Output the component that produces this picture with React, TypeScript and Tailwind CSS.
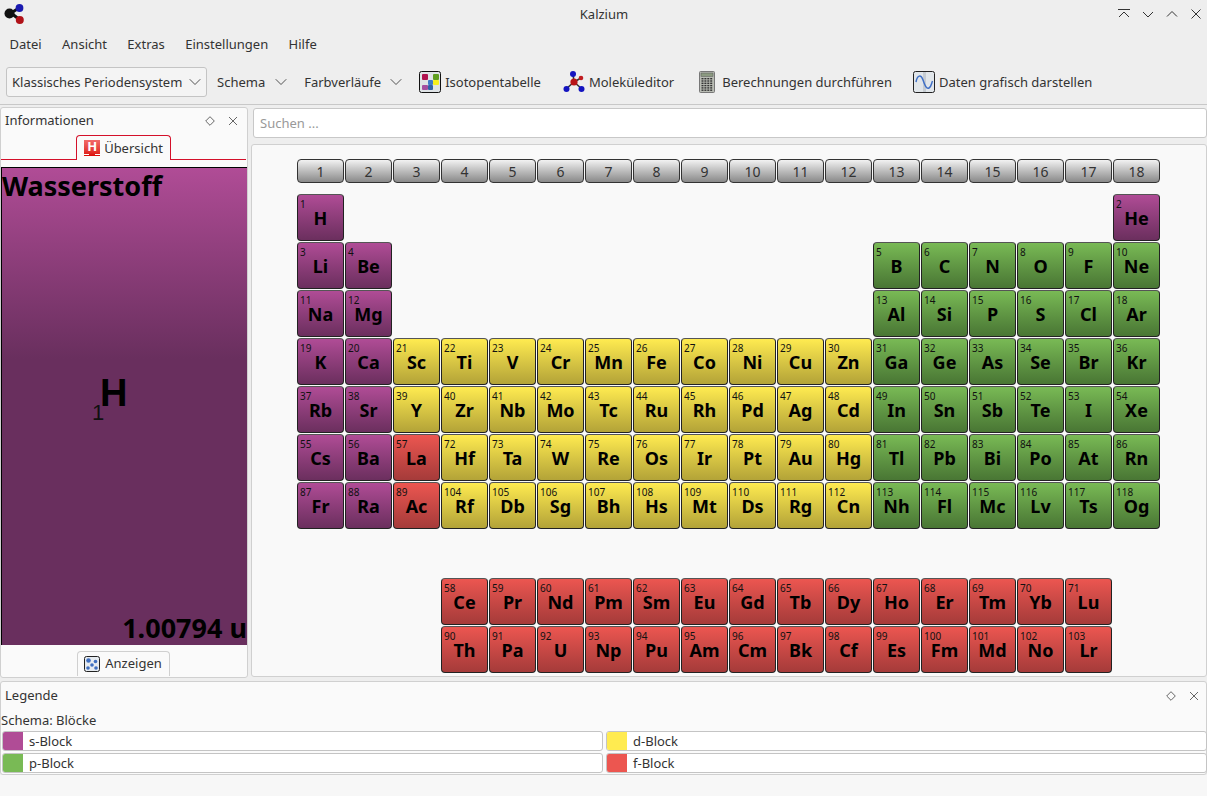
import { ChevronDown } from "lucide-react";

type Block = "s" | "p" | "d" | "f";

const cellStyles: Record<Block, string> = {
  s: "from-[#b04c96] to-[#6b2f5e]",
  p: "from-[#79ba55] to-[#497634]",
  d: "from-[#ffeb50] to-[#b3a338]",
  f: "from-[#ec5650] to-[#a53b3a]",
};

type Cell = { num: number; sym: string; block: Block } | null;

function seq(start: number, syms: string, block: Block): Cell[] {
  return syms.split(" ").map((sym, i) => ({ num: start + i, sym, block }));
}

function blanks(n: number): Cell[] {
  return Array.from({ length: n }, () => null);
}

const cells: Cell[] = [
  ...seq(1, "H", "s"), ...blanks(16), ...seq(2, "He", "s"),
  ...seq(3, "Li Be", "s"), ...blanks(10), ...seq(5, "B C N O F Ne", "p"),
  ...seq(11, "Na Mg", "s"), ...blanks(10), ...seq(13, "Al Si P S Cl Ar", "p"),
  ...seq(19, "K Ca", "s"), ...seq(21, "Sc Ti V Cr Mn Fe Co Ni Cu Zn", "d"), ...seq(31, "Ga Ge As Se Br Kr", "p"),
  ...seq(37, "Rb Sr", "s"), ...seq(39, "Y Zr Nb Mo Tc Ru Rh Pd Ag Cd", "d"), ...seq(49, "In Sn Sb Te I Xe", "p"),
  ...seq(55, "Cs Ba", "s"), ...seq(57, "La", "f"), ...seq(72, "Hf Ta W Re Os Ir Pt Au Hg", "d"), ...seq(81, "Tl Pb Bi Po At Rn", "p"),
  ...seq(87, "Fr Ra", "s"), ...seq(89, "Ac", "f"), ...seq(104, "Rf Db Sg Bh Hs Mt Ds Rg Cn", "d"), ...seq(113, "Nh Fl Mc Lv Ts Og", "p"),
  ...blanks(18),
  ...blanks(3), ...seq(58, "Ce Pr Nd Pm Sm Eu Gd Tb Dy Ho Er Tm Yb Lu", "f"), ...blanks(1),
  ...blanks(3), ...seq(90, "Th Pa U Np Pu Am Cm Bk Cf Es Fm Md No Lr", "f"), ...blanks(1),
];

function Logo() {
  return (
    <svg width="24" height="24" viewBox="0 0 24 24">
      <path d="M10 13L18 8M10 13L19 20" stroke="#111" strokeWidth="3" />
      <circle cx="8.5" cy="13.5" r="5" fill="#111" />
      <circle cx="18.5" cy="8" r="3.9" fill="#1a1ab0" />
      <circle cx="18.8" cy="20" r="4" fill="#b01218" />
    </svg>
  );
}

function IsotopeIcon() {
  return (
    <svg width="22" height="22" viewBox="0 0 22 22">
      <rect x="0.5" y="0.5" width="21" height="21" rx="2" fill="#dfe3e6" stroke="#111" />
      <rect x="3" y="3" width="6" height="6" rx="1" fill="#b0124e" />
      <rect x="14" y="3" width="6" height="6" rx="1" fill="#5f9e1f" />
      <rect x="14" y="9" width="6" height="5" rx="1" fill="#f5ef1e" />
      <rect x="9" y="9" width="5" height="5" rx="1" fill="#3f79c9" />
      <rect x="9" y="14" width="5" height="5" rx="1" fill="#2f62a8" />
      <rect x="3" y="14" width="6" height="5" rx="1" fill="#a44ea0" />
    </svg>
  );
}

function MoleculeIcon() {
  return (
    <svg width="22" height="24" viewBox="0 0 22 24">
      <path d="M11 12L10 4M11 12L3 19M11 12L19 19M11 12L18 8" stroke="#333" strokeWidth="1.6" />
      <circle cx="10" cy="4" r="3" fill="#1414c0" />
      <circle cx="3.5" cy="19" r="3" fill="#1414c0" />
      <circle cx="18.5" cy="19" r="3" fill="#1414c0" />
      <circle cx="18" cy="8" r="2.3" fill="#c01c20" />
      <circle cx="11" cy="12" r="3.6" fill="#b81418" />
    </svg>
  );
}

function CalculatorIcon() {
  const keys = [];
  for (let r = 0; r < 6; r++) {
    for (let c = 0; c < 4; c++) {
      keys.push(<rect key={`${r}-${c}`} x={2.5 + c * 2.9} y={7 + r * 2.3} width="2" height="1.4" fill="#333" />);
    }
  }
  return (
    <svg width="16" height="22" viewBox="0 0 16 22">
      <rect x="0.5" y="0.5" width="15" height="21" rx="1" fill="#b9bcb4" stroke="#777" />
      <rect x="2" y="2" width="12" height="3.4" fill="#8b9a80" stroke="#555" strokeWidth="0.5" />
      {keys}
    </svg>
  );
}

function PlotIcon() {
  return (
    <svg width="22" height="22" viewBox="0 0 22 22">
      <rect x="0.5" y="0.5" width="21" height="21" rx="2" fill="#e1e6ea" stroke="#222" />
      <rect x="10" y="1" width="3" height="20" fill="#c6ccd2" />
      <path d="M3 11C4.5 3.5 8 3.5 10 9S13.5 18.5 16 17 18.5 12 19.5 10" fill="none" stroke="#3f6fc6" strokeWidth="1.5" />
    </svg>
  );
}

function TabHIcon() {
  return (
    <div className="w-4 h-4 bg-gradient-to-b from-[#f26a6a] to-[#dc0000] flex flex-col items-center">
      <span className="text-white font-bold text-[13px] leading-[13px]">H</span>
      <div className="w-full h-[1px] mt-[1px] flex justify-between">
        <div className="w-[5px] bg-white" />
        <div className="w-[5px] bg-white" />
      </div>
    </div>
  );
}

function DiceIcon() {
  return (
    <svg width="16" height="16" viewBox="0 0 16 16">
      <rect x="0.5" y="0.5" width="15" height="15" rx="2" fill="#e6ebf0" stroke="#222" />
      <circle cx="4.5" cy="4.5" r="2.3" fill="#3f6fc0" />
      <circle cx="11.5" cy="5.5" r="1.8" fill="#3f6fc0" />
      <circle cx="8" cy="9" r="1.8" fill="#3f6fc0" />
      <circle cx="4" cy="12" r="1.8" fill="#3f6fc0" />
      <circle cx="12" cy="12" r="1.8" fill="#3f6fc0" />
    </svg>
  );
}

function WindowIcon({ d }: { d: string }) {
  return (
    <svg width="16" height="16" viewBox="0 0 16 16">
      <path d={d} fill="none" stroke="#333" strokeWidth="1" />
    </svg>
  );
}

function DockButtons() {
  return (
    <div className="flex items-center gap-[13px]">
      <svg width="10" height="10" viewBox="0 0 10 10">
        <path d="M5 .7L9.3 5 5 9.3 .7 5z" fill="none" stroke="#666" />
      </svg>
      <svg width="10" height="10" viewBox="0 0 10 10">
        <path d="M1 1L9 9M9 1L1 9" fill="none" stroke="#666" />
      </svg>
    </div>
  );
}

function ToolText({ children }: { children: string }) {
  return <span className="pt-[2px] text-[13px] text-[#333]">{children}</span>;
}

function Element({ cell }: { cell: NonNullable<Cell> }) {
  return (
    <div
      className={`relative w-[47px] h-[47px] rounded-[4px] border border-[#222] border-t-[#555] bg-gradient-to-b ${cellStyles[cell.block]} flex items-center justify-center`}
    >
      <span className="absolute left-[2px] top-[3px] text-[10px] leading-[12px] text-[#111]">{cell.num}</span>
      <span className="mt-[1px] text-[18px] font-bold leading-none text-black">{cell.sym}</span>
    </div>
  );
}

function LegendItem({ color, label }: { color: string; label: string }) {
  return (
    <div className="h-[20px] flex items-center bg-white border border-[#c4c4c4] rounded-[3px] overflow-hidden">
      <div className={`h-full w-[20px] ${color}`} />
      <span className="ml-[6px] pt-[2px] text-[13px] text-[#333]">{label}</span>
    </div>
  );
}

export default function App() {
  return (
    <div className="w-[1207px] h-[796px] overflow-hidden bg-[#eeeeee] flex flex-col text-[#333] font-['Noto_Sans',sans-serif]">
      {/* title bar */}
      <div className="h-[29px] shrink-0 relative flex items-center justify-center pl-[1px]">
        <div className="absolute left-[1px] top-0">
          <Logo />
        </div>
        <span className="text-[13px] text-[#333]">Kalzium</span>
        <div className="absolute right-[3px] top-[6px] flex items-center gap-[8px]">
          <WindowIcon d="M2 3.5h12M3 11L8 6l5 5" />
          <WindowIcon d="M3 6l5 5 5-5" />
          <WindowIcon d="M3 10.5l5-5 5 5" />
          <WindowIcon d="M3.5 3.5l9 9M12.5 3.5l-9 9" />
        </div>
      </div>

      {/* menu */}
      <div className="h-[31px] shrink-0 flex items-center gap-[20.4px] pl-[9.5px] text-[13px]">
        <span>Datei</span>
        <span>Ansicht</span>
        <span>Extras</span>
        <span>Einstellungen</span>
        <span>Hilfe</span>
      </div>

      {/* toolbar */}
      <div className="h-[45px] shrink-0 flex items-center pl-[6px] border-b border-[#c8c8c8]">
        <div className="h-[30px] w-[201px] flex items-center justify-between pl-[5px] pr-[1px] bg-[#f4f4f4] border border-[#c4c4c4] rounded-[3px] text-[13px]">
          <span className="pt-[2px]">Klassisches Periodensystem</span>
          <ChevronDown size={20} strokeWidth={1} />
        </div>
        <div className="ml-[10px] flex items-center gap-[6px]">
          <ToolText>Schema</ToolText>
          <ChevronDown size={20} strokeWidth={1} />
        </div>
        <div className="ml-[13px] flex items-center gap-[5px]">
          <ToolText>Farbverläufe</ToolText>
          <ChevronDown size={20} strokeWidth={1} />
        </div>
        <div className="ml-[13px] flex items-center gap-[4px]">
          <IsotopeIcon />
          <ToolText>Isotopentabelle</ToolText>
        </div>
        <div className="ml-[22px] flex items-center gap-[4px]">
          <MoleculeIcon />
          <ToolText>Moleküleditor</ToolText>
        </div>
        <div className="ml-[25px] flex items-center gap-[7px]">
          <CalculatorIcon />
          <ToolText>Berechnungen durchführen</ToolText>
        </div>
        <div className="ml-[21px] flex items-center gap-[4px]">
          <PlotIcon />
          <ToolText>Daten grafisch darstellen</ToolText>
        </div>
      </div>

      {/* main area */}
      <div className="h-[574px] shrink-0 flex pt-[2px]">
        <div className="w-[248px] h-[571px] shrink-0 flex flex-col bg-[#fafafa] border border-[#d0d0d0] rounded-[3px]">
          <div className="h-[27px] shrink-0 flex items-center justify-between pl-[4px] pr-[9px] pb-[2px] text-[13px]">
            <span>Informationen</span>
            <DockButtons />
          </div>
          <div className="h-[25px] shrink-0 relative border-b border-[#d4102a] mr-[1px]">
            <div className="absolute left-[75px] top-0 h-[25px] w-[95px] flex items-center justify-center gap-[4px] bg-[#fafafa] border border-b-0 border-[#d4102a] rounded-t-[4px] text-[13px]">
              <TabHIcon />
              <span className="pt-[2px]">Übersicht</span>
            </div>
          </div>
          <div className="h-[7px] shrink-0" />
          <div className="h-[478px] shrink-0 relative border-t border-l border-black bg-gradient-to-b from-[#b04c96] to-[#692f5e] to-40% overflow-hidden">
            <div className="absolute left-0 top-0 text-[27px] leading-[36px] font-bold text-black">Wasserstoff</div>
            <div className="absolute left-[98px] top-[202px] font-['Liberation_Sans',sans-serif] text-[38px] leading-[46px] font-bold text-black">H</div>
            <div className="absolute left-[90px] top-[232px] font-['Liberation_Sans',sans-serif] text-[22px] leading-[26px] text-[#111]">1</div>
            <div className="absolute right-0 bottom-[-1px] text-[27px] leading-[36px] font-bold text-black">1.00794 u</div>
          </div>
          <div className="flex-1 flex justify-center pr-[2px]">
            <div className="h-[25px] mt-[6px] w-[93px] flex items-center justify-center gap-[4px] bg-[#fafafa] border border-b-0 border-[#d0d0d0] rounded-t-[4px] text-[13px]">
              <DiceIcon />
              <span className="pl-[1px]">Anzeigen</span>
            </div>
          </div>
        </div>

        <div className="flex-1 min-w-0 flex flex-col pl-[3px]">
          <div className="h-[30px] ml-[2px] mt-[1px] pt-[2px] shrink-0 flex items-center pl-[6px] bg-white border border-[#c8c8c8] rounded-[3px] text-[13px] text-[#999]">
            Suchen ...
          </div>
          <div className="mt-[6px] h-[533px] shrink-0 bg-[#f9f9f9] border border-[#d0d0d0] rounded-[3px] pl-[45px] pt-[14px]">
            <div className="grid grid-cols-[repeat(18,48px)] h-[35px] items-start">
              {Array.from({ length: 18 }, (_, i) => (
                <div
                  key={i}
                  className="w-[47px] h-[24px] flex items-center justify-center rounded-[4px] border border-[#333] bg-gradient-to-b from-[#f2f2f2] to-[#8a8a8a] text-[14px] text-[#333]"
                >
                  {i + 1}
                </div>
              ))}
            </div>
            <div className="grid grid-cols-[repeat(18,48px)] auto-rows-[48px]">
              {cells.map((cell, i) => (cell ? <Element key={i} cell={cell} /> : <div key={i} />))}
            </div>
          </div>
        </div>
      </div>

      {/* legend */}
      <div className="mt-[2px] h-[94px] shrink-0 bg-[#fafafa] border border-[#d0d0d0] rounded-[3px] flex flex-col">
        <div className="h-[27px] shrink-0 flex items-center justify-between pl-[4px] pr-[7px] text-[13px]">
          <span>Legende</span>
          <DockButtons />
        </div>
        <div className="h-[22px] shrink-0 pt-[2px] flex items-center text-[13px]">Schema: Blöcke</div>
        <div className="grid grid-cols-[601px_601px] gap-x-[3px] gap-y-[2px] pl-[1px]">
          <LegendItem color="bg-[#b04c96]" label="s-Block" />
          <LegendItem color="bg-[#ffeb50]" label="d-Block" />
          <LegendItem color="bg-[#79ba55]" label="p-Block" />
          <LegendItem color="bg-[#ec5650]" label="f-Block" />
        </div>
      </div>
      <div className="flex-1 bg-[#f7f7f7]" />
    </div>
  );
}
